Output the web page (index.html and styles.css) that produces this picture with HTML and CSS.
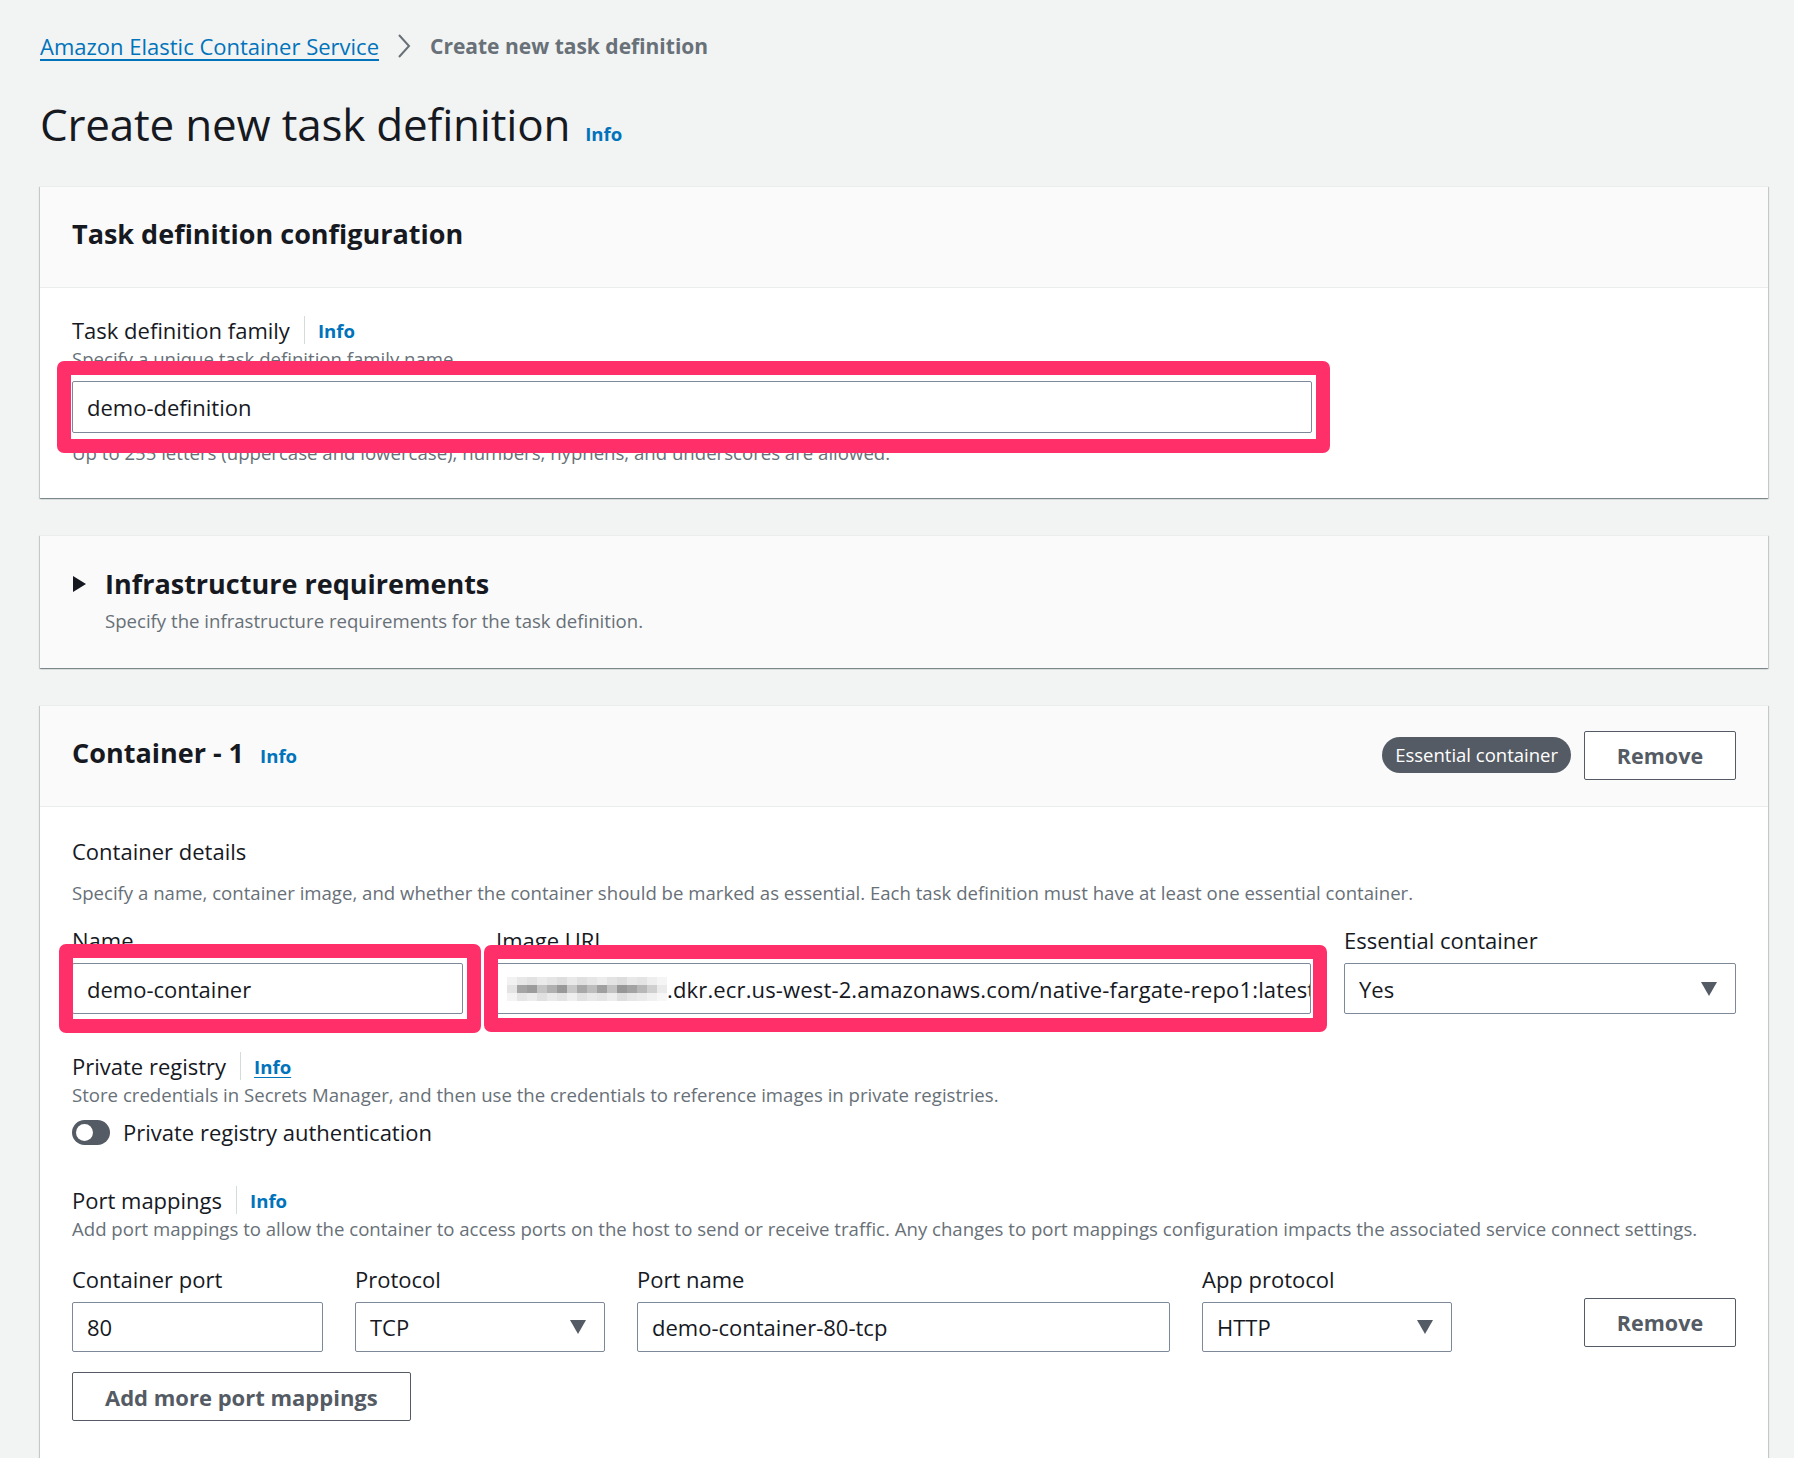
FILE: index.html
```html
<!DOCTYPE html>
<html lang="en">
<head>
<meta charset="utf-8">
<title>Create new task definition</title>
<link rel="stylesheet" href="styles.css">
</head>
<body>
<div class="page">
  <nav class="breadcrumbs">
    <a class="crumb-link" href="#">Amazon Elastic Container Service</a>
    <svg class="crumb-sep" width="14" height="26" viewBox="0 0 14 26"><polyline points="2,2 12,13 2,24" fill="none" stroke="#687078" stroke-width="2"/></svg>
    <span class="crumb-current">Create new task definition</span>
  </nav>

  <div class="page-header">
    <h1>Create new task definition</h1>
    <a class="info" href="#">Info</a>
  </div>

  <section class="panel">
    <header class="panel-header">
      <h2>Task definition configuration</h2>
    </header>
    <div class="panel-body family-body">
      <div class="label-row"><span class="label">Task definition family</span><span class="divider"></span><a class="info" href="#">Info</a></div>
      <div class="desc desc-tight">Specify a unique task definition family name.</div>
      <div class="control control-family hl hl-family"><div class="input">demo-definition</div></div>
      <div class="desc constraint">Up to 255 letters (uppercase and lowercase), numbers, hyphens, and underscores are allowed.</div>
    </div>
  </section>

  <section class="panel panel-collapsed">
    <div class="expand-row">
      <svg class="caret" width="13" height="16" viewBox="0 0 13 16"><polygon points="0,0 13,8 0,16" fill="#16191f"/></svg>
      <div class="expand-text">
        <h2>Infrastructure requirements</h2>
        <div class="desc expand-desc">Specify the infrastructure requirements for the task definition.</div>
      </div>
    </div>
  </section>

  <section class="panel panel-container">
    <header class="panel-header header-split">
      <div class="title-group"><h2>Container - 1</h2><a class="info" href="#">Info</a></div>
      <div class="actions"><span class="badge">Essential container</span><button class="btn btn-remove">Remove</button></div>
    </header>
    <div class="panel-body container-body">
      <div class="label section-label">Container details</div>
      <div class="desc details-desc">Specify a name, container image, and whether the container should be marked as essential. Each task definition must have at least one essential container.</div>

      <div class="grid-details">
        <div class="field">
          <div class="label">Name</div>
          <div class="control hl hl-name"><div class="input">demo-container</div></div>
        </div>
        <div class="field">
          <div class="label">Image URI</div>
          <div class="control hl hl-image">
            <div class="input input-uri">
              <svg class="mosaic" width="160" height="24" viewBox="0 0 160 24">
                <g>
                  <rect x="0" y="0" width="10" height="8" fill="#f2f2f2"/><rect x="10" y="0" width="10" height="8" fill="#e8e8e8"/><rect x="20" y="0" width="10" height="8" fill="#e2e2e2"/><rect x="30" y="0" width="10" height="8" fill="#ebebeb"/><rect x="40" y="0" width="10" height="8" fill="#e5e5e5"/><rect x="50" y="0" width="10" height="8" fill="#dedede"/><rect x="60" y="0" width="10" height="8" fill="#e9e9e9"/><rect x="70" y="0" width="10" height="8" fill="#e0e0e0"/><rect x="80" y="0" width="10" height="8" fill="#e6e6e6"/><rect x="90" y="0" width="10" height="8" fill="#ececec"/><rect x="100" y="0" width="10" height="8" fill="#e3e3e3"/><rect x="110" y="0" width="10" height="8" fill="#dddddd"/><rect x="120" y="0" width="10" height="8" fill="#e8e8e8"/><rect x="130" y="0" width="10" height="8" fill="#e4e4e4"/><rect x="140" y="0" width="10" height="8" fill="#eeeeee"/><rect x="150" y="0" width="10" height="8" fill="#f5f5f5"/>
                  <rect x="0" y="8" width="10" height="8" fill="#e4e4e4"/><rect x="10" y="8" width="10" height="8" fill="#a5a5a5"/><rect x="20" y="8" width="10" height="8" fill="#9c9c9c"/><rect x="30" y="8" width="10" height="8" fill="#c4c4c4"/><rect x="40" y="8" width="10" height="8" fill="#b0b0b0"/><rect x="50" y="8" width="10" height="8" fill="#999999"/><rect x="60" y="8" width="10" height="8" fill="#c8c8c8"/><rect x="70" y="8" width="10" height="8" fill="#a8a8a8"/><rect x="80" y="8" width="10" height="8" fill="#bdbdbd"/><rect x="90" y="8" width="10" height="8" fill="#a0a0a0"/><rect x="100" y="8" width="10" height="8" fill="#c2c2c2"/><rect x="110" y="8" width="10" height="8" fill="#979797"/><rect x="120" y="8" width="10" height="8" fill="#a3a3a3"/><rect x="130" y="8" width="10" height="8" fill="#b8b8b8"/><rect x="140" y="8" width="10" height="8" fill="#cfcfcf"/><rect x="150" y="8" width="10" height="8" fill="#eaeaea"/>
                  <rect x="0" y="16" width="10" height="8" fill="#f4f4f4"/><rect x="10" y="16" width="10" height="8" fill="#e6e6e6"/><rect x="20" y="16" width="10" height="8" fill="#ececec"/><rect x="30" y="16" width="10" height="8" fill="#e1e1e1"/><rect x="40" y="16" width="10" height="8" fill="#eaeaea"/><rect x="50" y="16" width="10" height="8" fill="#e4e4e4"/><rect x="60" y="16" width="10" height="8" fill="#efefef"/><rect x="70" y="16" width="10" height="8" fill="#e2e2e2"/><rect x="80" y="16" width="10" height="8" fill="#e9e9e9"/><rect x="90" y="16" width="10" height="8" fill="#e5e5e5"/><rect x="100" y="16" width="10" height="8" fill="#ededed"/><rect x="110" y="16" width="10" height="8" fill="#dfdfdf"/><rect x="120" y="16" width="10" height="8" fill="#e7e7e7"/><rect x="130" y="16" width="10" height="8" fill="#ebebeb"/><rect x="140" y="16" width="10" height="8" fill="#f1f1f1"/><rect x="150" y="16" width="10" height="8" fill="#f7f7f7"/>
                </g>
              </svg><span class="uri-text">.dkr.ecr.us-west-2.amazonaws.com/native-fargate-repo1:latest</span>
            </div>
          </div>
        </div>
        <div class="field">
          <div class="label">Essential container</div>
          <div class="control">
            <div class="input select"><span>Yes</span><svg class="arrow" width="16" height="14" viewBox="0 0 16 14"><polygon points="0,0 16,0 8,14" fill="#545b64"/></svg></div>
          </div>
        </div>
      </div>

      <div class="label-row registry-row"><span class="label">Private registry</span><span class="divider"></span><a class="info info-underline" href="#">Info</a></div>
      <div class="desc desc-tight">Store credentials in Secrets Manager, and then use the credentials to reference images in private registries.</div>
      <div class="toggle-row"><span class="toggle"></span><span class="label">Private registry authentication</span></div>

      <div class="label-row ports-row"><span class="label">Port mappings</span><span class="divider"></span><a class="info" href="#">Info</a></div>
      <div class="desc desc-tight">Add port mappings to allow the container to access ports on the host to send or receive traffic. Any changes to port mappings configuration impacts the associated service connect settings.</div>

      <div class="grid-ports">
        <div class="field">
          <div class="label">Container port</div>
          <div class="input input-port">80</div>
        </div>
        <div class="field">
          <div class="label">Protocol</div>
          <div class="input input-port select"><span>TCP</span><svg class="arrow" width="16" height="14" viewBox="0 0 16 14"><polygon points="0,0 16,0 8,14" fill="#545b64"/></svg></div>
        </div>
        <div class="field">
          <div class="label">Port name</div>
          <div class="input input-port">demo-container-80-tcp</div>
        </div>
        <div class="field">
          <div class="label">App protocol</div>
          <div class="input input-port select"><span>HTTP</span><svg class="arrow" width="16" height="14" viewBox="0 0 16 14"><polygon points="0,0 16,0 8,14" fill="#545b64"/></svg></div>
        </div>
        <div class="spacer"></div>
        <div class="field field-action">
          <button class="btn btn-remove">Remove</button>
        </div>
      </div>

      <button class="btn btn-add">Add more port mappings</button>
    </div>
  </section>
</div>
</body>
</html>
```

FILE: styles.css
```css
* { box-sizing: border-box; }
html, body { margin: 0; padding: 0; }
body {
  background: #f2f3f3;
  font-family: "Open Sans", "Noto Sans", sans-serif;
  color: #16191f;
  overflow: hidden;
}
.page { padding: 32px 26px 0 40px; }

/* breadcrumbs */
.breadcrumbs { display: flex; align-items: center; height: 28px; font-size: 22px; }
.crumb-link { color: #0073bb; text-decoration: underline; text-underline-offset: 4px; text-decoration-thickness: 2px; }
.crumb-sep { margin: 0 19px 0 18px; }
.crumb-current { color: #687078; font-weight: 700; font-size: 21px; }

/* page header */
.page-header { display: flex; align-items: baseline; gap: 15px; margin-top: 39px; height: 50px; }
h1 { margin: 0; font-size: 44px; font-weight: 400; line-height: 50px; letter-spacing: -0.2px; }
.info { color: #0073bb; font-weight: 700; font-size: 18.6px; text-decoration: none; }
.info-underline { text-decoration: underline; text-underline-offset: 3px; }

/* panels */
.panel {
  background: #fff;
  margin-top: 37px;
  border-top: 1px solid #eaeded;
  box-shadow: 0 1px 1px 0 rgba(0, 28, 36, 0.3), 1px 1px 1px 0 rgba(0, 28, 36, 0.15), -1px 1px 1px 0 rgba(0, 28, 36, 0.15);
}
.panel-header {
  background: #fafafa;
  height: 101px;
  padding: 0 32px 6px;
  display: flex;
  align-items: center;
  border-bottom: 1px solid #eaeded;
}
h2 { margin: 0; font-size: 27px; font-weight: 700; line-height: 30px; }
.panel-body { padding: 30px 32px 33px; }
.family-body { padding-top: 28px; }
.family-body .control { margin-top: 10px; }

/* labels & descriptions */
.label { font-size: 22px; line-height: 28px; color: #16191f; }
.label-row { display: flex; align-items: center; height: 28px; }
.divider { width: 1px; height: 28px; background: #d5dbdb; margin: 0 13px 0 14px; }
.desc { font-size: 18.6px; line-height: 24px; color: #687078; }
.desc-tight { margin-top: 3px; }
.constraint { margin-top: 8px; }

/* inputs */
.control { position: relative; margin-top: 8px; }
.control-family { width: 1240px; }
.input {
  height: 52px;
  border: 1px solid #7d8998;
  border-radius: 2px;
  background: #fff;
  padding: 0 14px;
  display: flex;
  align-items: center;
  font-size: 22px;
  color: #16191f;
  white-space: nowrap;
  overflow: hidden;
}
.input-uri { padding-left: 10px; }
.mosaic { flex: none; display: block; }
.uri-text { flex: none; letter-spacing: 0.15px; }
.select { justify-content: space-between; padding-right: 18px; }
.arrow { flex: none; display: block; }

/* highlight overlays */
.hl::after {
  content: "";
  position: absolute;
  border: 14px solid #ff3069;
  border-radius: 7px;
  pointer-events: none;
  z-index: 2;
}
.hl-family::after { top: -20px; bottom: -20px; left: -15px; right: -18px; }
.hl-name::after { top: -19px; bottom: -19px; left: -13px; right: -18px; }
.hl-image::after { top: -18px; bottom: -18px; left: -12px; right: -16px; }

/* collapsed panel */
.panel-collapsed { background: #fafafa; }
.expand-row { display: flex; align-items: flex-start; padding: 33px 32px 35px 33px; }
.caret { margin-top: 7px; margin-right: 19px; flex: none; }
.expand-desc { margin-top: 10px; }

/* container panel */
.panel-container { margin-top: 37px; }
.header-split { justify-content: space-between; }
.header-split .actions { margin-top: 4px; }
.title-group { display: flex; align-items: baseline; gap: 16px; }
.actions { display: flex; align-items: center; gap: 13px; }
.badge {
  height: 36px;
  border-radius: 18px;
  background: #545b64;
  color: #fff;
  font-size: 18.5px;
  line-height: 36px;
  padding: 0 13px;
  white-space: nowrap;
}
.btn {
  font-family: inherit;
  height: 49px;
  border: 1px solid #545b64;
  border-radius: 2px;
  background: #fff;
  color: #545b64;
  font-size: 21.5px;
  font-weight: 700;
  padding: 0 32px;
  cursor: pointer;
}
.btn-remove { width: 152px; padding: 0; }
.btn-add { font-size: 22px; }

.container-body { padding: 30px 32px 80px; }
.details-desc { margin-top: 16px; }
.grid-details {
  display: grid;
  grid-template-columns: 391px 815px 392px;
  column-gap: 33px;
  margin-top: 21px;
}
.grid-details .control { margin-top: 9px; }
.grid-details .input { height: 51px; }

.registry-row { margin-top: 38px; }
.toggle-row { display: flex; align-items: center; gap: 13px; margin-top: 11px; height: 28px; }
.toggle {
  position: relative;
  width: 38px;
  height: 25px;
  border-radius: 13px;
  background: #545b64;
  flex: none;
}
.toggle::after {
  content: "";
  position: absolute;
  left: 4px;
  top: 4px;
  width: 17px;
  height: 17px;
  border-radius: 50%;
  background: #fff;
}

.ports-row { margin-top: 40px; }
.grid-ports {
  display: grid;
  grid-template-columns: 251px 250px 533px 250px 1fr 152px;
  column-gap: 32px;
  margin-top: 24px;
}
.input-port { height: 50px; margin-top: 9px; }
.field-action { padding-top: 33px; }
.btn-add { margin-top: 20px; }
```
